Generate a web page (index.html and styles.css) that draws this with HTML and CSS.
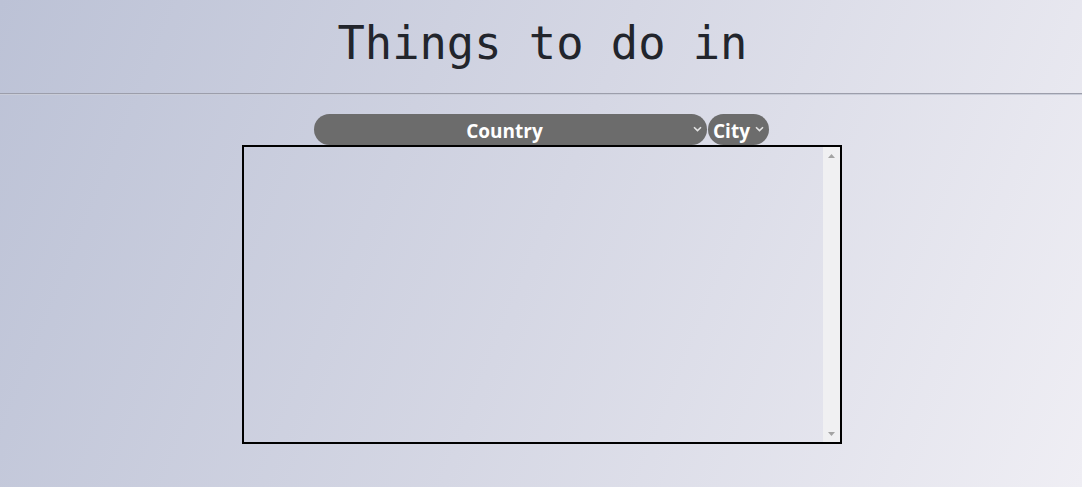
FILE: index.html
```html
<!DOCTYPE html>
<html lang="en">
<head>
<meta charset="utf-8">
<title>Things to do in</title>
<link rel="stylesheet" href="styles.css">
</head>
<body>
<header class="header">
  <h1 class="title">Things to do in</h1>
</header>
<hr class="divider">
<main class="main">
  <div class="controls">
    <span class="sel sel-country">
      <select class="select select-country">
        <option>Country</option>
      </select>
      <svg class="chev" width="9" height="6" viewBox="0 0 9 6"><path d="M1 1.2 L4.5 4.6 L8 1.2" fill="none" stroke="#e4e4e4" stroke-width="1.6"/></svg>
    </span>
    <span class="sel sel-city">
      <select class="select select-city">
        <option>City</option>
      </select>
      <svg class="chev" width="9" height="6" viewBox="0 0 9 6"><path d="M1 1.2 L4.5 4.6 L8 1.2" fill="none" stroke="#e4e4e4" stroke-width="1.6"/></svg>
    </span>
  </div>
  <div class="results">
    <div class="results-body"></div>
    <div class="scrollbar">
      <svg class="arrow" width="7" height="4" viewBox="0 0 7 4"><path d="M0 4 L3.5 0 L7 4 Z" fill="#a3a3a3"/></svg>
      <svg class="arrow" width="7" height="4" viewBox="0 0 7 4"><path d="M0 0 L3.5 4 L7 0 Z" fill="#a3a3a3"/></svg>
    </div>
  </div>
</main>
</body>
</html>
```
FILE: styles.css
```css
html, body {
  margin: 0;
  padding: 0;
}
body {
  min-height: 100vh;
  background: linear-gradient(112deg, #bcc2d6 0%, #d5d7e4 50%, #efeef4 100%);
  font-family: "Open Sans", "Noto Sans", sans-serif;
}
.header {
  padding-top: 17px;
}
.title {
  margin: 0;
  text-align: center;
  font-family: "DejaVu Sans Mono", "Liberation Mono", monospace;
  font-weight: normal;
  font-size: 45.4px;
  line-height: 54px;
  color: #22252c;
  padding-left: 3px;
}
.divider {
  margin: 22px 0 0;
  border: 0;
  border-top: 1px solid #9c9eab;
  border-bottom: 1px solid #c9ccd8;
  height: 0;
}
.main {
  padding-top: 19px;
}
.controls {
  display: flex;
  justify-content: center;
  gap: 1px;
  padding-left: 1px;
}
.sel {
  position: relative;
  display: inline-block;
}
.select {
  appearance: none;
  -webkit-appearance: none;
  display: block;
  box-sizing: border-box;
  height: 31px;
  border: 0;
  border-radius: 16px;
  background: #6c6c6c;
  color: #ffffff;
  font-family: "Open Sans", "Noto Sans", sans-serif;
  font-weight: bold;
  font-size: 19px;
  line-height: 27px;
  padding-top: 4px;
  margin: 0;
}
.select-country {
  width: 393px;
  padding-right: 16px;
  padding-left: 4px;
  text-align: center;
  text-align-last: center;
}
.select-city {
  width: 61px;
  padding-right: 16px;
  padding-left: 5px;
}
.chev {
  position: absolute;
  right: 5px;
  top: 12px;
  pointer-events: none;
}
.results {
  display: flex;
  width: 596px;
  height: 295px;
  margin: 0 auto;
  border: 2px solid #000;
  position: relative;
  left: 1px;
}
.results-body {
  flex: 1;
}
.scrollbar {
  width: 17px;
  background: #f0f0f2;
  display: flex;
  flex-direction: column;
  justify-content: space-between;
  align-items: center;
  padding: 7px 0 6px;
}
.arrow {
  display: block;
}
```
